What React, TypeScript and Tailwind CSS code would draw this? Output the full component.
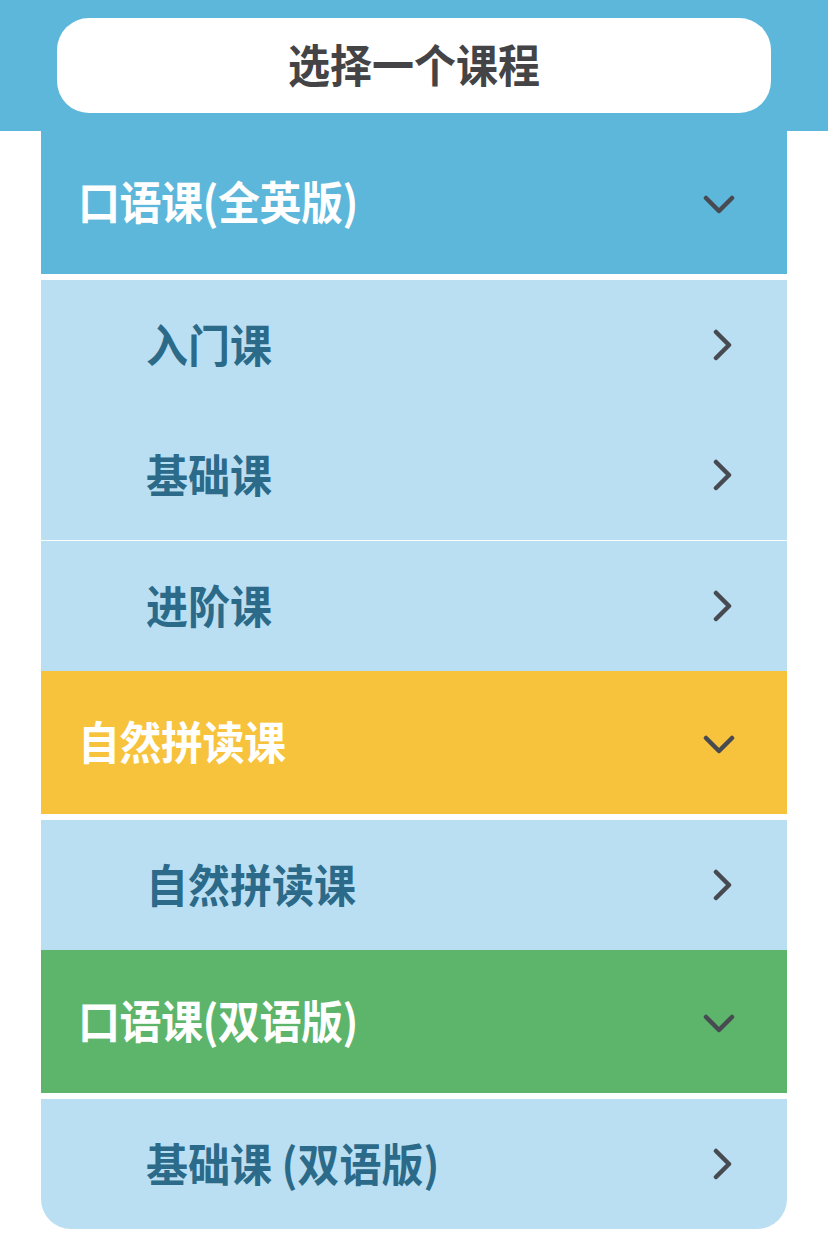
import React from "react";

type Section = {
  title: string;
  color: string;
  items: { label: string; divider?: boolean }[];
};

const sections: Section[] = [
  {
    title: "口语课(全英版)",
    color: "bg-[#5db7da]",
    items: [{ label: "入门课" }, { label: "基础课" }, { label: "进阶课", divider: true }],
  },
  {
    title: "自然拼读课",
    color: "bg-[#f7c33c]",
    items: [{ label: "自然拼读课" }],
  },
  {
    title: "口语课(双语版)",
    color: "bg-[#5db56b]",
    items: [{ label: "基础课 (双语版)" }],
  },
];

function ChevronDown() {
  return (
    <svg width="32" height="20" viewBox="0 0 32 20" fill="none" className="mt-[4px]">
      <path d="M3 3 L16 16 L29 3" stroke="#474a50" strokeWidth="4.5" strokeLinecap="round" strokeLinejoin="round" />
    </svg>
  );
}

function ChevronRight() {
  return (
    <svg width="20" height="32" viewBox="0 0 20 32" fill="none">
      <path d="M3 3 L16 16 L3 29" stroke="#474a50" strokeWidth="4.5" strokeLinecap="round" strokeLinejoin="round" />
    </svg>
  );
}

export default function App() {
  return (
    <div
      className="w-[828px] min-h-[1234px] bg-white"
      style={{ fontFamily: '"Noto Sans CJK SC", "Noto Sans", sans-serif' }}
    >
      {/* Title band */}
      <div className="bg-[#5db7da] px-[57px] py-[18px]">
        <div className="h-[95px] rounded-[32px] bg-white flex items-center justify-center">
          <span className="inline-block -mt-[3px] scale-y-[1.08] text-[42px] font-bold text-[#444446] leading-none">选择一个课程</span>
        </div>
      </div>

      {/* Course list */}
      <div className="mx-[41px] rounded-b-[30px] overflow-hidden">
        {sections.map((s) => (
          <div key={s.title}>
            <div className={`${s.color} h-[143px] flex items-center justify-between pl-[37px] pr-[52px]`}>
              <span className="inline-block -mt-[4px] scale-y-[1.08] text-[42px] font-bold text-white leading-none tracking-[-0.5px]">{s.title}</span>
              <ChevronDown />
            </div>
            <div className="h-[6px] bg-white" />
            {s.items.map((it) => (
              <div key={it.label}>
                {it.divider && <div className="h-px bg-white" />}
                <div className="bg-[#bbdff2] h-[130px] flex items-center justify-between pl-[105px] pr-[54px]">
                  <span className="inline-block -mt-[2px] scale-y-[1.08] text-[42px] font-bold text-[#2b6a89] leading-none">{it.label}</span>
                  <ChevronRight />
                </div>
              </div>
            ))}
          </div>
        ))}
      </div>
    </div>
  );
}
